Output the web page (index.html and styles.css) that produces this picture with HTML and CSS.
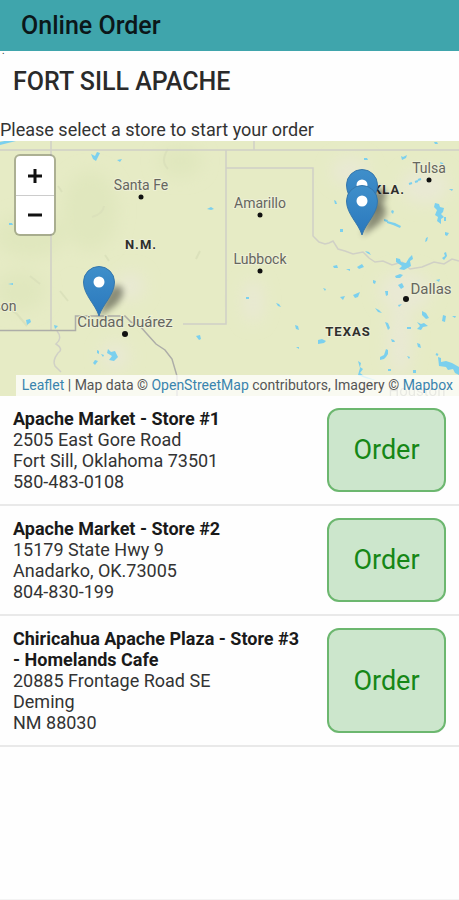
FILE: index.html
```html
<!DOCTYPE html>
<html lang="en">
<head>
    <meta charset="UTF-8">
    <meta name="viewport" content="width=device-width, initial-scale=1.0">
    <title>Online Order</title>
    <link rel="stylesheet" href="styles.css">
</head>
<body>
<header class="topbar">Online Order</header>
<main>
    <div class="mark">.</div>
    <h1 class="title">FORT SILL APACHE</h1>
    <p class="hint">Please select a store to start your order</p>
    <div class="map">
        <svg class="tiles" viewBox="0 0 459 255" preserveAspectRatio="xMidYMid slice">
            <defs>
                <linearGradient id="pinFill" x1="0" y1="0" x2="0" y2="1">
                    <stop offset="0" stop-color="#3f8fca"/>
                    <stop offset="1" stop-color="#2a78bd"/>
                </linearGradient>
                <filter id="soft" x="-50%" y="-50%" width="200%" height="200%">
                    <feGaussianBlur stdDeviation="3"/>
                </filter>
                <filter id="haze" x="-50%" y="-50%" width="200%" height="200%">
                    <feGaussianBlur stdDeviation="8"/>
                </filter>
                <g id="pin">
                    <path d="M0 0L5 -17Q13 -35 21 -31Q29 -25 17 -12Z" fill="#000" opacity=".4" filter="url(#soft)"/>
                    <path d="M0 -1C-3 -12 -15.500 -22 -15.500 -35A15.500 15.500 0 0 1 15.500 -35C15.500 -22 3 -12 0 -1Z" fill="url(#pinFill)" stroke="#3577ac"/>
                    <circle cx="0" cy="-35" r="5.500" fill="#fff"/>
                </g>
            </defs>
            <rect width="459" height="255" fill="#e6ebc5"/>
            <!-- terrain -->
            <g fill="#e0e7be" filter="url(#haze)">
                <ellipse cx="30" cy="95" rx="35" ry="22"/>
                <ellipse cx="90" cy="70" rx="28" ry="40"/>
                <ellipse cx="20" cy="150" rx="25" ry="20"/>
                <ellipse cx="180" cy="20" rx="22" ry="16"/>
            </g>
            <g fill="#e9e9d4" filter="url(#haze)">
                <ellipse cx="405" cy="150" rx="26" ry="20"/>
                <ellipse cx="400" cy="200" rx="12" ry="36"/>
                <ellipse cx="350" cy="30" rx="18" ry="14"/>
                <ellipse cx="130" cy="145" rx="14" ry="14"/>
                <ellipse cx="253" cy="160" rx="10" ry="22"/>
                <ellipse cx="115" cy="215" rx="14" ry="14"/>
                <ellipse cx="425" cy="45" rx="24" ry="18"/>
            </g>
            <g fill="none" stroke="#dbe1bb" stroke-width="2">
                <path d="M168 8q-8 12 0 20M104 65q-1 8-12 11M58 45l4 6M200 110l-4 8M5 165l12 8l10 12M60 150l8 10M30 135l10 8M105 114l4 6"/>
            </g>
            <!-- state lines -->
            <g fill="none" stroke="#d0d0c6" stroke-width="1.500">
                <path d="M0 9H459M51 0V189M226 9V183H183M254 0V9M226 27H313V95L319 101L325 103L329 102L333 100L338 108L345 110L353 113L363 111L369 117L375 121L383 120L392 124L402 121L410 128L422 126L434 121L444 123L452 118L459 120"/>
                <path d="M57 190q6 7-1 13q8 5 2 9q-6 8-3 13l6 6"/>
            </g>
            <path d="M0 189.500H75.500V175H125L131 181L139 184L147 193L156 203L165 209L172 218L177 235V255" fill="none" stroke="#adada8" stroke-width="1.500"/>
            <!-- lakes -->
            <g fill="#7bd0ee">
                <path d="M0 1Q6-1 16 0Q8 2 0 4ZM91 13l4 2l2-4l3 1l-4 8l-3-2ZM117 19l5-1l-2 3ZM207 68l4-2l3 2l-3 1ZM9 82h3l1 2h-4ZM8 143l5-1v2ZM54 184l4 1l-3 3ZM196 195l4-1l1 4l-2 1ZM26 179l4-1l1 3l-4 3Z"/>
                <path d="M93 222l2-3l3 1l-3 4ZM97 209l2 1v3l-2-1ZM101 213l3 1l-1 2ZM108 208l3 3l4-1l3 6l-4 4l-5-1l3-4l-5-3Z"/>
                <path d="M364 17h3l1 2h-4ZM401 15l2 1l4-2l-1 3l-4 2ZM434 1h3l1 2h-3ZM440 21l3 1l1 3l-3-1ZM449 48h4l-1 2ZM334 59l2 1l1 3h-2ZM340 88h3v3h-3ZM365 110l4 1l2 3l-4-2ZM426 97l2-1l-1 4l-2 1ZM445 91l4 1l-2 3l-2-1ZM392 69l2 1l-1 3l-2-2ZM384 78l4 1l-1 2l-3-1ZM387 80l8 2l6 3l-1 2l-7-3l-6-2Z"/>
                <path d="M435 62l4 1l1 3l4 1l-1 4l-2 2l3 3l-3 2v5l-4-3l1-4l-3-2l2-5l-3-3ZM444 76h2v4h-2ZM444 112l2-1l1 4l-3 4l-2-2l3-2ZM396 117l4 1l1 3l5 1l3-5l3-3l1 4l-3 2l1 5l-7 4l-5-1l3-3l-6-4ZM333 125l4-1l1 3h-4ZM346 128h4v2ZM357 126l5-3l2 3l-5 2Z"/>
                <path d="M373 139l3 1l-1 3l-2-1ZM395 135l5-2l3 1l-3 3h-4ZM398 144l4-2l2 4l-3 2ZM436 139l4-1l-1 3ZM323 147l3 1l-1 2ZM353 154l7-3l-2 5l-3 1ZM340 156l5-1l-2 4ZM385 150h3v4l-2 1ZM398 164l4-1l-3 3ZM375 167l4 2l3 3l-4-1ZM246 156h3v2h-3ZM276 162l3 1l2 3l-3-1Z"/>
                <path d="M422 170l4 2l3 5l-3 1l-4-4ZM417 181l4 2l3-1l4 3l-5 1l-2 3l-4-1l3-3ZM443 174l3 1l-1 6l-3-1ZM452 175h4l-1 2ZM407 186h4v2h-4ZM385 181l3 1l2 5l-2 2ZM295 184l3 1l1 4l-3-1ZM318 199l4-1l4 2l-2 2l-6 1ZM296 206h3v2ZM391 198l3 1l1 2h-3ZM417 202l3 1l1 4l-3-1Z"/>
                <path d="M386 208l2 1v4l-2 3l-2 2l-4 1v-3l4-2ZM407 215l3 1l-1 2ZM388 228h3v2h-3ZM413 229h3v3h-3ZM358 220l3 2l-1 4l3 2l-3 4l4 3l14 5l-13-3l-7-3l2-7ZM438 216l3 1v4l5-1l6 2l7 4v8l-4-2l-2-4l-5 1l-2-3l-7-1Z"/>
            </g>
            <path d="M409 43l3-1M415 41l3-1M418 39l3-1M436 213l2 1" fill="none" stroke="#7bd0ee" stroke-width="2"/>
            <g class="city">
                <text x="141" y="49">Santa Fe</text>
                <text x="260" y="67">Amarillo</text>
                <text x="260" y="123">Lubbock</text>
                <text x="429" y="32">Tulsa</text>
                <text class="big" x="431" y="153">Dallas</text>
                <text class="big" x="125" y="186">Ciudad Juárez</text>
                <text x="5" y="170">son</text>
                <text class="big" x="417" y="255" opacity=".5">Houston</text>
            </g>
            <g fill="#111">
                <circle cx="141" cy="56" r="2.500"/>
                <circle cx="260" cy="74" r="2.500"/>
                <circle cx="260" cy="130" r="2.500"/>
                <circle cx="429" cy="39" r="2.500"/>
                <circle cx="406" cy="158" r="3"/>
                <circle cx="125" cy="193" r="3"/>
            </g>
            <g class="state">
                <text x="141" y="108">N.M.</text>
                <text x="384" y="53">OKLA.</text>
                <text x="348" y="195">TEXAS</text>
            </g>
            <use href="#pin" x="99" y="176"/>
            <use href="#pin" x="362" y="79"/>
            <use href="#pin" x="362" y="95"/>
        </svg>
        <div class="zoom">
            <button type="button" aria-label="Zoom in"><svg viewBox="0 0 14 14"><path d="M0 7H14M7 0V14"/></svg></button>
            <button type="button" aria-label="Zoom out"><svg viewBox="0 0 14 14"><path d="M0 7H14"/></svg></button>
        </div>
        <div class="attribution"><a href="#">Leaflet</a> | Map data © <a href="#">OpenStreetMap</a> contributors, Imagery © <a href="#">Mapbox</a></div>
    </div>
    <ul class="stores">
        <li class="store">
            <div class="info">
                <b>Apache Market - Store #1</b><br>
                2505 East Gore Road<br>
                Fort Sill, Oklahoma 73501<br>
                580-483-0108
            </div>
            <button type="button" class="order">Order</button>
        </li>
        <li class="store">
            <div class="info">
                <b>Apache Market - Store #2</b><br>
                15179 State Hwy 9<br>
                Anadarko, OK.73005<br>
                804-830-199
            </div>
            <button type="button" class="order">Order</button>
        </li>
        <li class="store">
            <div class="info">
                <b>Chiricahua Apache Plaza - Store #3 - Homelands Cafe</b><br>
                20885 Frontage Road SE<br>
                Deming<br>
                NM 88030
            </div>
            <button type="button" class="order">Order</button>
        </li>
    </ul>
</main>
</body>
</html>
```
FILE: styles.css
```css
*{
    box-sizing: border-box;
}
body{
    margin: 0;
    min-height: 100vh;
    background-color: #fefefe;
    border-bottom: 1px solid #f3f3f3;
    color: #333;
    font-family: Roboto, "Liberation Sans", sans-serif;
    font-size: 18px;
    line-height: 21px;
}
.topbar{
    padding: 11px 21px 10px;
    background-color: #3fa5ac;
    color: #0b1719;
    font-size: 25px;
    font-weight: 500;
    line-height: 30px;
}
.mark{
    padding-left: 2px;
    font-size: 10px;
    line-height: 0;
}
.title{
    margin: 0;
    padding: 16px 13px 22px;
    color: #2a2a2a;
    font-size: 25px;
    font-weight: 500;
    line-height: 30px;
}
.hint{
    margin: 0;
    padding-bottom: 1px;
}

.map{
    position: relative;
    height: 255px;
    overflow: hidden;
}
.tiles{
    display: block;
    width: 100%;
    height: 100%;
}
.city, .state{
    text-anchor: middle;
    paint-order: stroke;
    stroke: #edf0d6;
    stroke-width: 2px;
}
.city{
    fill: #66665f;
    font-size: 14px;
}
.city .big{
    font-size: 15px;
}
.state{
    fill: #2f2f2c;
    font-size: 13px;
    font-weight: 700;
    letter-spacing: 1px;
}
.zoom{
    position: absolute;
    top: 13px;
    left: 14px;
    display: flex;
    flex-direction: column;
    border: 2px solid rgba(0,0,0,.25);
    border-radius: 6px;
    background-clip: padding-box;
    background-color: #fff;
}
.zoom button{
    display: flex;
    justify-content: center;
    align-items: center;
    width: 38px;
    height: 39px;
    padding: 0;
    border: 0;
    background: none;
}
.zoom button + button{
    border-top: 1px solid #ccc;
}
.zoom svg{
    width: 14px;
    height: 14px;
    fill: none;
    stroke: #111;
    stroke-width: 3;
}
.attribution{
    position: absolute;
    right: 0;
    bottom: 0;
    padding: 0 6px;
    background-color: rgba(255,255,255,.75);
    color: #555;
    font-size: 14px;
    white-space: nowrap;
}
.attribution a{
    color: #3a84ae;
    text-decoration: none;
}

.stores{
    margin: 0;
    padding: 0;
    list-style: none;
}
.store{
    display: flex;
    justify-content: space-between;
    gap: 24px;
    padding: 12px 13px;
    border-bottom: 2px solid #e9e9e9;
}
.info{
    flex: 1;
}
.info b{
    color: #1a1a1a;
    font-weight: 700;
}
.order{
    width: 119px;
    border: 2px solid #6cb76f;
    border-radius: 12px;
    background-color: #cce6cc;
    color: #168716;
    font-family: inherit;
    font-size: 27px;
}
```
